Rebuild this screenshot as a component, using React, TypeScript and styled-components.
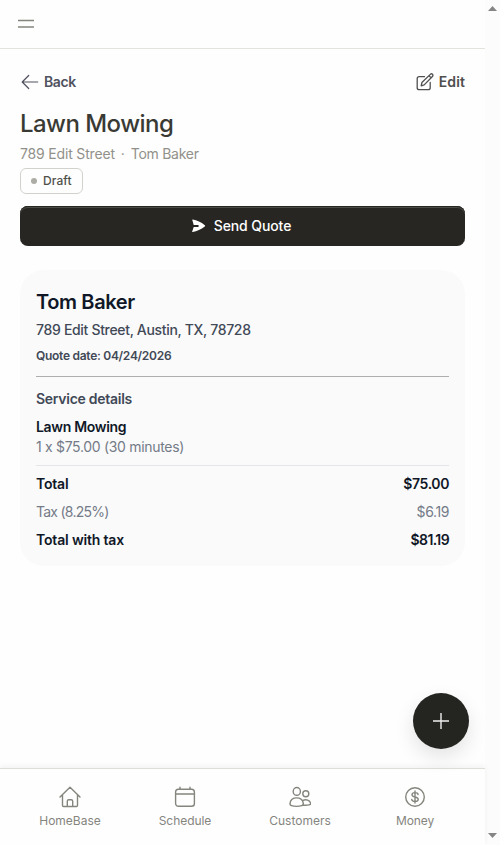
import React from "react";
import styled, { createGlobalStyle } from "styled-components";

const Global = createGlobalStyle`
  * { box-sizing: border-box; }
  body { margin: 0; background: #fefefe; overflow: hidden; font-family: Inter, "Liberation Sans", sans-serif; }
  svg { display: block; flex: none; }
  h1, h2, h3, p { margin: 0; }
  button { font-family: inherit; border: 0; padding: 0; background: none; }
`;

const Screen = styled.div`
  display: grid;
  grid-template-columns: 1fr 15px;
  height: 845px;
`;
const Page = styled.div`
  position: relative;
  display: flex;
  flex-direction: column;
  min-width: 0;
`;
const TopBar = styled.header`
  height: 49px;
  padding: 0 18px;
  display: flex;
  align-items: center;
  border-bottom: 1px solid #e3e3de;
`;
const Main = styled.main`
  flex: 1;
  padding: 23px 20px 0;
`;
const Actions = styled.div`
  display: flex;
  justify-content: space-between;
  height: 20px;
  margin-bottom: 16px;
`;
const Action = styled.button<{ $color: string; $gap: number; $spacing: string }>`
  display: flex;
  align-items: center;
  gap: ${(p) => p.$gap}px;
  color: ${(p) => p.$color};
  font-size: 14px;
  line-height: 20px;
  font-weight: 600;
  letter-spacing: ${(p) => p.$spacing};
`;
const Title = styled.h1`
  font-size: 24px;
  line-height: 32px;
  font-weight: 500;
  letter-spacing: -0.54px;
  color: #3a3a35;
  margin-bottom: 4px;
`;
const Subtitle = styled.p`
  display: flex;
  gap: 6px;
  font-size: 14px;
  line-height: 20px;
  letter-spacing: -0.2px;
  color: #91918a;
`;
const SubtitlePart = styled.span<{ $spacing: string }>`
  letter-spacing: ${(p) => p.$spacing};
`;
const Badge = styled.div`
  display: flex;
  align-items: center;
  gap: 6px;
  width: 63px;
  height: 26px;
  margin-top: 4px;
  padding: 0 0 1px 10px;
  border: 1px solid #d2d2cd;
  border-radius: 6px;
  color: #50504a;
  font-size: 12px;
  font-weight: 500;
  letter-spacing: 0.1px;
`;
const Dot = styled.span`
  width: 6px;
  height: 6px;
  border-radius: 50%;
  background: #adada5;
`;
const SendButton = styled.button`
  display: flex;
  align-items: center;
  justify-content: center;
  gap: 8px;
  width: 100%;
  height: 40px;
  margin-top: 12px;
  padding: 0 3px 1px 0;
  border-radius: 8px;
  background: #272622;
  box-shadow: inset 0 1px #272622, inset 0 2px #4a4a46;
  color: #fff;
  font-size: 14px;
  font-weight: 500;
  letter-spacing: -0.1px;
`;
const Card = styled.section`
  margin-top: 24px;
  padding: 16px;
  border-radius: 24px;
  background: #fafafa;
`;
const Name = styled.h2`
  font-size: 20px;
  line-height: 32px;
  font-weight: 600;
  letter-spacing: -0.38px;
  color: #101828;
`;
const Address = styled.p`
  font-size: 14px;
  line-height: 24px;
  font-weight: 500;
  letter-spacing: -0.32px;
  color: #414957;
`;
const QuoteDate = styled.p`
  margin-top: 4px;
  font-size: 12px;
  line-height: 20px;
  font-weight: 600;
  letter-spacing: -0.28px;
  color: #414957;
`;
const Rule = styled.div<{ $color: string; $top: number }>`
  height: 1px;
  margin-top: ${(p) => p.$top}px;
  background: ${(p) => p.$color};
`;
const SectionTitle = styled.h3`
  margin: 12px 0 8px;
  font-size: 14px;
  line-height: 20px;
  font-weight: 600;
  letter-spacing: -0.27px;
  color: #414957;
`;
const Line = styled.div<{ $strong?: boolean }>`
  display: flex;
  justify-content: space-between;
  font-size: 14px;
  line-height: 20px;
  font-weight: ${(p) => (p.$strong ? 600 : 400)};
  color: ${(p) => (p.$strong ? "#101828" : "#747b88")};
`;
const Value = styled.span<{ $spacing: string }>`
  letter-spacing: ${(p) => p.$spacing};
`;
const Totals = styled.div`
  display: grid;
  gap: 8px;
  margin-top: 8px;
`;
const AddButton = styled.button`
  position: absolute;
  right: 16px;
  bottom: 96px;
  display: grid;
  place-items: center;
  width: 56px;
  height: 56px;
  border-radius: 50%;
  background: #242420;
  box-shadow: 0 8px 20px rgba(0, 0, 0, 0.11);
`;
const Nav = styled.nav`
  display: grid;
  grid-template-columns: repeat(4, 115px);
  height: 77px;
  padding: 17px 12px 0 12.5px;
  border-top: 1px solid #deded9;
  background: #fefefe;
  box-shadow: 0 -2px 6px rgba(0, 0, 0, 0.05);
`;
const NavItem = styled.a<{ $spacing: string }>`
  display: flex;
  flex-direction: column;
  align-items: center;
  gap: 5px;
  color: #85857e;
  font-size: 12px;
  line-height: 16px;
  letter-spacing: ${(p) => p.$spacing};
`;
const Scrollbar = styled.div`
  display: flex;
  flex-direction: column;
  justify-content: space-between;
  align-items: center;
  padding: 6px 0 7px;
  background: #fcfcfc;
`;

const stroke = { fill: "none", stroke: "currentColor", strokeLinecap: "round", strokeLinejoin: "round" } as const;

const HomeIcon = () => (
  <svg width="22" height="22" viewBox="0 0 22 22" {...stroke} strokeWidth="1.4">
    <path d="M1 11 11 1.2 21 11M3.5 9v10.5q0 1 1 1h13q1 0 1-1V9M8.3 20.5v-5.2q0-1.5 1.5-1.5h2.4q1.5 0 1.5 1.5v5.2" />
  </svg>
);
const CalendarIcon = () => (
  <svg width="22" height="22" viewBox="0 0 22 22" {...stroke} strokeWidth="1.4">
    <rect x="1.6" y="3.3" width="18.8" height="17" rx="2.8" />
    <path d="M1.6 8h18.8M6 1.3v2M16 1.3v2" />
  </svg>
);
const CustomersIcon = () => (
  <svg width="22" height="22" viewBox="0 0 22 22" {...stroke} strokeWidth="1.4">
    <ellipse cx="7.8" cy="5.4" rx="3.6" ry="3.9" />
    <circle cx="16.8" cy="7.7" r="3" />
    <path d="M1 17.3c.5-3.2 3-5.4 6.6-5.4s6.2 2.2 6.7 5.4c.1 1.2-.4 2-1.4 2.3-3.4 1-7.2 1-10.5 0-1-.3-1.5-1.1-1.4-2.3ZM14 14.3c3.2-1.4 6.7-.1 7.5 2.6.3 1.2-.3 1.8-1.4 2-1.9.4-4 .4-6.1.2" />
  </svg>
);
const MoneyIcon = () => (
  <svg width="22" height="22" viewBox="0 0 22 22" {...stroke} strokeWidth="1.4">
    <circle cx="11" cy="11" r="9.3" />
    <path d="M11 5v12M14.1 8.5C13.8 7.2 12.7 6.6 11 6.6c-1.8 0-3 .8-3 2.1 0 3.2 6.2 1.3 6.2 4.6 0 1.4-1.3 2.2-3.2 2.2-1.8 0-3-.7-3.3-2.1" />
  </svg>
);

const tabs = [
  { label: "HomeBase", Icon: HomeIcon, spacing: "0px" },
  { label: "Schedule", Icon: CalendarIcon, spacing: "-0.05px" },
  { label: "Customers", Icon: CustomersIcon, spacing: "0px" },
  { label: "Money", Icon: MoneyIcon, spacing: "-0.1px" },
];

export default function App() {
  return (
    <>
      <Global />
      <Screen>
        <Page>
          <TopBar>
            <svg width="16" height="10" fill="none" stroke="#85857e" strokeWidth="1.4">
              <path d="M0 1.5h16M0 8h16" />
            </svg>
          </TopBar>
          <Main>
            <Actions>
              <Action $color="#50525f" $gap={4} $spacing="-0.4px">
                <svg width="20" height="20" {...stroke} strokeWidth="1.2">
                  <path d="M17.7 10H2.2M8.7 3.5 2.2 10 8.7 16.5" />
                </svg>
                Back
              </Action>
              <Action $color="#4e4f4e" $gap={4} $spacing="0.1px">
                <svg width="20" height="20" {...stroke} strokeWidth="1.3">
                  <path d="M9.5 4.7H4.2Q2.2 4.7 2.2 6.7v9q0 2 2 2h9q2 0 2-2V10.5M6.2 13.8l.7-3.3 8.4-8.1c.7-.7 1.6-.7 2.2-.1s.6 1.5-.1 2.2L9.2 12.9ZM14 3.7l2.2 2.2" />
                </svg>
                Edit
              </Action>
            </Actions>
            <Title>Lawn Mowing</Title>
            <Subtitle>
              <SubtitlePart $spacing="-0.17px">789 Edit Street</SubtitlePart>
              <span>·</span>
              <SubtitlePart $spacing="-0.27px">Tom Baker</SubtitlePart>
            </Subtitle>
            <Badge>
              <Dot />
              Draft
            </Badge>
            <SendButton>
              <svg width="15" height="14" fill="#fff">
                <path d="M1.3.9Q1.1.5 1.7.6C6 1.3 10 3.2 13.8 6.3q.8.6 0 1.2C10 10.5 6 12.2 1.7 13q-.7.2-.5-.6L2.7 7.9h4.2q.9 0 .9-1t-.9-1H2.7Z" />
              </svg>
              Send Quote
            </SendButton>
            <Card>
              <Name>Tom Baker</Name>
              <Address>789 Edit Street, Austin, TX, 78728</Address>
              <QuoteDate>Quote date: 04/24/2026</QuoteDate>
              <Rule $color="#aeaeac" $top={10} />
              <SectionTitle>Service details</SectionTitle>
              <Line $strong>
                <Value $spacing="-0.32px">Lawn Mowing</Value>
              </Line>
              <Line>
                <Value $spacing="-0.31px">1 x $75.00 (30 minutes)</Value>
              </Line>
              <Rule $color="#e3e5e8" $top={8} />
              <Totals>
                <Line $strong>
                  <Value $spacing="-0.2px">Total</Value>
                  <Value $spacing="-0.4px">$75.00</Value>
                </Line>
                <Line>
                  <Value $spacing="-0.75px">Tax (8.25%)</Value>
                  <Value $spacing="-0.4px">$6.19</Value>
                </Line>
                <Line $strong>
                  <Value $spacing="-0.17px">Total with tax</Value>
                  <Value $spacing="-0.6px">$81.19</Value>
                </Line>
              </Totals>
            </Card>
          </Main>
          <Nav>
            {tabs.map(({ label, Icon, spacing }) => (
              <NavItem key={label} $spacing={spacing}>
                <Icon />
                {label}
              </NavItem>
            ))}
          </Nav>
          <AddButton aria-label="Add">
            <svg width="18" height="18" fill="none" stroke="#f0f0ee" strokeWidth="1.4">
              <path d="M9 1v16M1 9h16" />
            </svg>
          </AddButton>
        </Page>
        <Scrollbar>
          <svg width="9" height="5" fill="#858585">
            <path d="M0 5 4.5 0 9 5Z" />
          </svg>
          <svg width="9" height="5" fill="#858585">
            <path d="M0 0h9L4.5 5Z" />
          </svg>
        </Scrollbar>
      </Screen>
    </>
  );
}
